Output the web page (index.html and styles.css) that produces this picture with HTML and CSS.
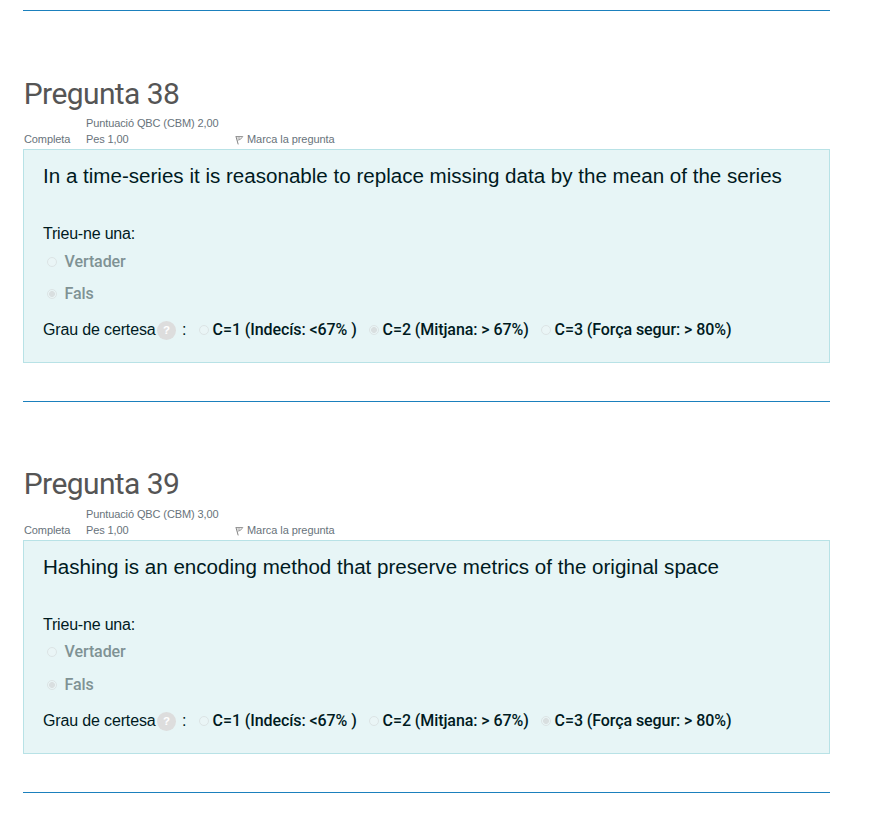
FILE: index.html
```html
<!DOCTYPE html>
<html lang="ca">
<head>
<meta charset="utf-8">
<title>Revisió del qüestionari</title>
<link rel="stylesheet" href="styles.css">
</head>
<body>
<main class="quiz">
  <section class="question">
    <h3 class="title"><span>Pregunta 38</span></h3>
    <div class="info">
      <span class="state"><span>Completa</span></span>
      <span class="grade"><span>Puntuació QBC (CBM) 2,00</span><br><span>Pes 1,00</span></span>
      <span class="flag"><svg width="9" height="10" viewBox="0 0 9 10"><path d="M.9 1.2 3.2 9.4" fill="none" stroke="#858585"/><path d="M1 1.5H7.8L5.4 4.4 2.4 5.2M2.4 3H5.4" fill="none" stroke="#8c8c8c" stroke-width=".9"/></svg><span>Marca la pregunta</span></span>
    </div>
    <div class="content">
      <p class="text"><span>In a time-series it is reasonable to replace missing data by the mean of the series</span></p>
      <p class="prompt"><span>Trieu-ne una:</span></p>
      <div class="answer"><i class="radio"></i><span>Vertader</span></div>
      <div class="answer last"><i class="radio on"></i><span>Fals</span></div>
      <div class="certainty">
        <span class="label">Grau de certesa</span><b class="help">?</b><span class="colon">:</span>
        <span class="choice c1"><i class="radio"></i><span>C=1 (Indecís: &lt;67% )</span></span>
        <span class="choice c2"><i class="radio on"></i><span>C=2 (Mitjana: &gt; 67%)</span></span>
        <span class="choice"><i class="radio"></i><span>C=3 (Força segur: &gt; 80%)</span></span>
      </div>
    </div>
  </section>
  <section class="question second">
    <h3 class="title"><span>Pregunta 39</span></h3>
    <div class="info">
      <span class="state"><span>Completa</span></span>
      <span class="grade"><span>Puntuació QBC (CBM) 3,00</span><br><span>Pes 1,00</span></span>
      <span class="flag"><svg width="9" height="10" viewBox="0 0 9 10"><path d="M.9 1.2 3.2 9.4" fill="none" stroke="#858585"/><path d="M1 1.5H7.8L5.4 4.4 2.4 5.2M2.4 3H5.4" fill="none" stroke="#8c8c8c" stroke-width=".9"/></svg><span>Marca la pregunta</span></span>
    </div>
    <div class="content">
      <p class="text"><span>Hashing is an encoding method that preserve metrics of the original space</span></p>
      <p class="prompt"><span>Trieu-ne una:</span></p>
      <div class="answer"><i class="radio"></i><span>Vertader</span></div>
      <div class="answer last"><i class="radio on"></i><span>Fals</span></div>
      <div class="certainty">
        <span class="label">Grau de certesa</span><b class="help">?</b><span class="colon">:</span>
        <span class="choice c1"><i class="radio"></i><span>C=1 (Indecís: &lt;67% )</span></span>
        <span class="choice c2"><i class="radio"></i><span>C=2 (Mitjana: &gt; 67%)</span></span>
        <span class="choice"><i class="radio on"></i><span>C=3 (Força segur: &gt; 80%)</span></span>
      </div>
    </div>
  </section>
</main>
</body>
</html>
```
FILE: styles.css
```css
* { box-sizing: border-box; }
body { margin: 0; background: #fff; font-family: "Liberation Sans", Arial, sans-serif; color: #001a1e; overflow: hidden; }
.quiz { width: 807px; margin: 10px 0 0 23px; border-top: 1px solid #1b80bd; }
.question { height: 391px; padding-top: 65px; border-bottom: 1px solid #1b80bd; white-space: nowrap; }
.title { height: 39px; margin: 0 0 0 .8px; font: 400 30px/35px Roboto, sans-serif; letter-spacing: -.6px; color: #555; }
.info { display: flex; align-items: flex-end; height: 34px; padding: 0 0 2px 1px; font-size: 11px; line-height: 16px; letter-spacing: -.11px; color: #68737b; }
.state { width: 62px; }
.grade { width: 149px; }
.flag { display: flex; align-items: center; letter-spacing: -.06px; }
.flag svg { margin: 1px 3px 0 0; }
.content { height: 214px; padding: 14px 19px 0; background: #e7f5f6; border: 1px solid #b8e2e6; }
.text { height: 58px; margin: 0; font-size: 20.58px; line-height: 24px; }
.prompt { height: 24px; margin: 0; font-size: 16px; line-height: 24px; letter-spacing: -.2px; }
.answer { display: flex; align-items: center; height: 32px; padding-left: 4px; font: 500 16px/24px Roboto, sans-serif; letter-spacing: -.1px; color: #7f9294; }
.answer span { margin-left: 7.6px; }
.radio { width: 10px; height: 10px; flex: none; border: 1px solid #dce4e5; border-radius: 50%; background: #eaf5f6; }
.on { background: radial-gradient(circle, #d9dfe0 0 2.6px, #eaf5f6 3.3px); }
.certainty { display: flex; align-items: center; height: 40px; font-size: 16px; line-height: 24px; letter-spacing: -.15px; }
.help { width: 19px; height: 19px; margin-top: 1px; border-radius: 50%; background: #ddd; color: #fff; font: 700 11.5px/19px "Liberation Sans", sans-serif; text-align: center; }
.label { width: 114px; }
.colon { width: 23px; padding-left: 6px; }
.choice { display: flex; align-items: center; font-family: Roboto, sans-serif; font-weight: 500; letter-spacing: -.08px; }
.choice .radio { margin-right: 3.6px; }
.c1 { width: 170px; }
.c2 { width: 172px; }
.second { padding-top: 64px; }
.second .title { height: 40px; }
.second .prompt { height: 23px; }
.second .last { height: 34px; }
.second .certainty { height: 38px; }
```
